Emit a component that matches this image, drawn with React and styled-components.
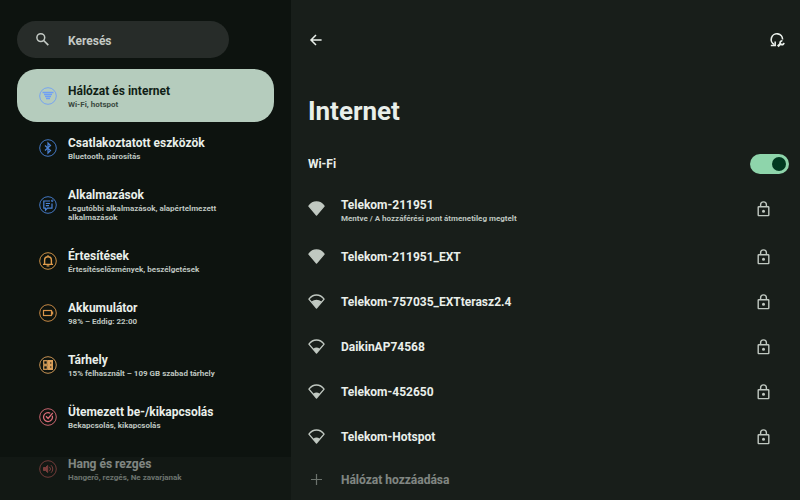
import React from 'react'
import styled, { createGlobalStyle } from 'styled-components'

const GlobalStyle = createGlobalStyle`
  * {
    box-sizing: border-box;
  }

  body {
    margin: 0;
    background: #181e1a;
    color: #e9efea;
    font-family: Roboto, 'Noto Sans', sans-serif;
  }

  button,
  input {
    font-family: inherit;
  }
`

const Page = styled.div`
  position: relative;
  display: grid;
  grid-template-columns: 4fr 7fr;
  height: 100vh;
  overflow: hidden;
`

const Sidebar = styled.aside`
  min-width: 0;
  padding: 21px 17px 0;
  background: #0d130f;
`

const SearchBox = styled.label`
  display: flex;
  align-items: center;
  gap: 18px;
  height: 37px;
  margin: 0 45px 11px 0;
  padding: 0 18px;
  border-radius: 19px;
  background: #272c29;
  color: #c3c9c4;

  svg {
    flex: none;
  }
`

const SearchInput = styled.input`
  flex: 1;
  min-width: 0;
  padding: 2px 0 0;
  border: 0;
  outline: 0;
  background: none;
  color: #c3c9c4;
  font-size: 12px;
  font-weight: 700;

  &::placeholder {
    color: #c3c9c4;
    opacity: 1;
  }
`

// the selected entry is one pixel taller than the rest
const MenuItem = styled.a`
  display: flex;
  align-items: center;
  gap: 11px;
  min-height: ${p => (p.$selected ? '53px' : '52px')};
  padding: 13px 30px 13px 22px;
  border-radius: 20px;
  background: ${p => (p.$selected ? '#b5ccbd' : 'transparent')};
  color: ${p => (p.$selected ? '#101e16' : '#e9efea')};
  text-decoration: none;
`

const MenuIcon = styled.svg`
  flex: none;
  width: 18px;
  height: 18px;
  fill: none;
  stroke: currentColor;
  color: ${p => p.color};
`

const Title = styled.span`
  display: block;
  font-size: 12px;
  line-height: 17px;
  font-weight: 700;
`

const Summary = styled.span`
  display: block;
  color: ${p => (p.$selected ? '#3b4a41' : '#bfc6c0')};
  font-size: 8px;
  line-height: 9px;
  font-weight: 700;
`

const Content = styled.main`
  min-width: 0;
  padding: 30px 11px 0 17px;
`

const TopBar = styled.header`
  display: flex;
  align-items: center;
  justify-content: space-between;
  height: 20px;
  padding-right: 4px;
`

const IconButton = styled.button`
  display: flex;
  padding: 0;
  border: 0;
  background: none;
  color: #e9efea;
`

const Heading = styled.h1`
  margin: 46px 0 16px;
  font-size: 26px;
  line-height: 30px;
  font-weight: 700;
`

const SwitchRow = styled.label`
  display: flex;
  align-items: center;
  justify-content: space-between;
  height: 44px;
`

const Switch = styled.input`
  appearance: none;
  display: flex;
  align-items: center;
  width: 39px;
  height: 20px;
  margin: 0;
  padding: 0 3px;
  border-radius: 10px;
  background: #8ed5ab;

  &::after {
    content: '';
    width: 14px;
    height: 14px;
    border-radius: 50%;
    background: #003920;
  }

  &:checked {
    justify-content: flex-end;
  }
`

const NetworkList = styled.ul`
  margin: 0;
  padding: 0;
  list-style: none;
`

const NetworkButton = styled.button`
  display: flex;
  align-items: center;
  gap: 16px;
  width: 100%;
  min-height: ${p => (p.$tall ? '48px' : '45px')};
  padding: 0 19px ${p => (p.$tall ? '3px' : '0')} 0;
  border: 0;
  background: none;
  color: #e9efea;
  text-align: left;

  svg {
    flex: none;
    color: #c0c8c1;
  }
`

const NetworkText = styled.span`
  flex: 1;
  padding-top: 2px;
`

const AddButton = styled(NetworkButton)`
  min-height: 41px;
`

// translucent navigation area laid over the end of both lists
const NavScrim = styled.div`
  position: absolute;
  right: 0;
  bottom: 0;
  left: 0;
  height: 43px;
  background: rgba(24, 30, 26, 0.5);
  pointer-events: none;
`

const menu = [
  {
    title: 'Hálózat és internet',
    summary: 'Wi-Fi, hotspot',
    color: '#6f9ff5',
    selected: true,
    icon: <path d='M3.5 5.5h11M5 7.5h8M6 9.5h6M7 11.5h4' strokeWidth='1.3' />
  },
  {
    title: 'Csatlakoztatott eszközök',
    summary: 'Bluetooth, párosítás',
    color: '#4a82d6',
    icon: <path d='M6 6.5l5.5 5L9 14V4l2.5 2.5L6 11.5' strokeWidth='1.2' />
  },
  {
    title: 'Alkalmazások',
    summary: 'Legutóbbi alkalmazások, alapértelmezett alkalmazások',
    color: '#4a82d6',
    icon: (
      <>
        <path d='M11 5H4.8v7.2h1.7v2l2-2H13V7.5M6.8 7.5h4.2M6.8 9.7h3.2' strokeWidth='1.2' />
        <circle cx='13.2' cy='4.8' r='0.8' />
      </>
    )
  },
  {
    title: 'Értesítések',
    summary: 'Értesítéselőzmények, beszélgetések',
    color: '#e09d4c',
    icon: (
      <>
        <path d='M4 12.4h10M5.6 12V8.2a3.4 3.4 0 0 1 6.8 0V12M9 3.2v1.6' strokeWidth='1.4' />
        <path d='M7.6 13.9h2.8' strokeWidth='1.2' />
      </>
    )
  },
  {
    title: 'Akkumulátor',
    summary: '98% – Eddig: 22:00',
    color: '#d8944a',
    icon: (
      <>
        <rect x='4.5' y='6.5' width='8' height='5' strokeWidth='1.2' />
        <path d='M13.6 7.6v2.8' strokeWidth='1.2' />
      </>
    )
  },
  {
    title: 'Tárhely',
    summary: '15% felhasznált – 109 GB szabad tárhely',
    color: '#dba05a',
    icon: (
      <>
        <rect x='4.7' y='4.7' width='3.6' height='3.6' strokeWidth='1.2' />
        <rect x='4.7' y='9.7' width='3.6' height='3.6' strokeWidth='1.2' />
        <rect x='9.5' y='4.5' width='4' height='9' fill='currentColor' />
        <path d='M11 7h1.4M11 11h1.4' stroke='#0d130f' />
      </>
    )
  },
  {
    title: 'Ütemezett be-/kikapcsolás',
    summary: 'Bekapcsolás, kikapcsolás',
    color: '#dc6d79',
    icon: <path d='M11.2 5.2a4.5 4.5 0 1 0 2.1 2.6M7 8.3l2.1 2.2L13.8 4.8' strokeWidth='1.3' />
  },
  {
    title: 'Hang és rezgés',
    summary: 'Hangerő, rezgés, Ne zavarjanak',
    color: '#dc5f5f',
    icon: (
      <>
        <path d='M4.5 7.5h2L8.7 5.5v7L6.5 10.5h-2z' fill='currentColor' />
        <path d='M10.4 6.8a3 3 0 0 1 0 4.4M12 5.2a5 5 0 0 1 0 7.6' />
      </>
    )
  }
]

const networks = [
  {
    name: 'Telekom-211951',
    status: 'Mentve / A hozzáférési pont átmenetileg megtelt',
    level: 4
  },
  { name: 'Telekom-211951_EXT', level: 4 },
  { name: 'Telekom-757035_EXTterasz2.4', level: 3 },
  { name: 'DaikinAP74568', level: 2 },
  { name: 'Telekom-452650', level: 2 },
  { name: 'Telekom-Hotspot', level: 2 }
]

const signalFill = {
  2: 'M5.2 9.8a5.5 5.5 0 0 1 6.6 0L8.5 14z',
  3: 'M3.4 7.6a8.5 8.5 0 0 1 10.2 0L8.5 14z',
  4: 'M.9 5.1C3 2.3 5.7 1 8.5 1s5.5 1.3 7.6 4.1L8.5 14z'
}

const Signal = ({ level }) => (
  <svg width='17' height='15' viewBox='0 0 17 15' aria-hidden='true'>
    <path
      d='M.9 5.1C3 2.3 5.7 1 8.5 1s5.5 1.3 7.6 4.1L8.5 14z'
      fill='none'
      stroke='currentColor'
      strokeWidth='1.3'
      strokeLinejoin='round'
    />
    <path d={signalFill[level]} fill='currentColor' />
  </svg>
)

const Lock = () => (
  <svg width='13' height='16' viewBox='0 0 13 16' fill='none' stroke='currentColor' aria-hidden='true'>
    <rect x='1.2' y='5.7' width='10.6' height='8.9' rx='0.6' strokeWidth='1.4' />
    <path d='M3.6 5.5V3.8a2.9 2.9 0 0 1 5.8 0v1.7' strokeWidth='1.4' />
    <circle cx='6.5' cy='10.2' r='1.5' fill='currentColor' stroke='none' />
  </svg>
)

export default function App() {
  return (
    <Page>
      <GlobalStyle />
      <Sidebar>
        <SearchBox>
          <svg width='15' height='15' viewBox='0 0 15 15' fill='none' stroke='currentColor' aria-hidden='true'>
            <circle cx='5.8' cy='5.6' r='3.9' strokeWidth='1.5' />
            <path d='M8.7 8.5l4.6 4.6' strokeWidth='1.7' />
          </svg>
          <SearchInput type='search' placeholder='Keresés' aria-label='Keresés' />
        </SearchBox>
        <nav>
          {menu.map(item => (
            <MenuItem key={item.title} href='#' $selected={item.selected}>
              <MenuIcon viewBox='0 0 18 18' color={item.color} aria-hidden='true'>
                <circle cx='9' cy='9' r='8.3' strokeWidth='0.9' />
                {item.icon}
              </MenuIcon>
              <span>
                <Title>{item.title}</Title>
                <Summary $selected={item.selected}>{item.summary}</Summary>
              </span>
            </MenuItem>
          ))}
        </nav>
      </Sidebar>
      <Content>
        <TopBar>
          <IconButton aria-label='Vissza'>
            <svg width='16' height='16' viewBox='0 0 16 16' fill='none' stroke='currentColor' strokeWidth='1.5'>
              <path d='M13.6 8H3.6M8 3L3 8l5 5' />
            </svg>
          </IconButton>
          <IconButton aria-label='Internet visszaállítása'>
            <svg width='16' height='16' viewBox='0 0 16 16' fill='none' stroke='currentColor'>
              <path d='M5.4 12.6A5.7 5.7 0 1 1 13.6 7.6' strokeWidth='1.6' />
              <path d='M1.8 13.6h4.4V9.6' strokeWidth='1.5' />
              <path d='M8.8 14.4l3.2-3.2' strokeWidth='2.2' />
              <path d='M13.4 8.9a1.9 1.9 0 1 0 1.5 2' strokeWidth='1.7' />
            </svg>
          </IconButton>
        </TopBar>
        <Heading>Internet</Heading>
        <SwitchRow>
          <Title>Wi-Fi</Title>
          <Switch type='checkbox' role='switch' defaultChecked />
        </SwitchRow>
        <NetworkList>
          {networks.map(network => (
            <li key={network.name}>
              <NetworkButton $tall={Boolean(network.status)}>
                <Signal level={network.level} />
                <NetworkText>
                  <Title>{network.name}</Title>
                  {network.status && <Summary>{network.status}</Summary>}
                </NetworkText>
                <Lock />
              </NetworkButton>
            </li>
          ))}
        </NetworkList>
        <AddButton>
          <svg width='17' height='17' viewBox='0 0 17 17' fill='none' stroke='currentColor' aria-hidden='true'>
            <path d='M8.5 3v11M3 8.5h11' strokeWidth='1.2' />
          </svg>
          <NetworkText>
            <Title>Hálózat hozzáadása</Title>
          </NetworkText>
        </AddButton>
      </Content>
      <NavScrim />
    </Page>
  )
}
